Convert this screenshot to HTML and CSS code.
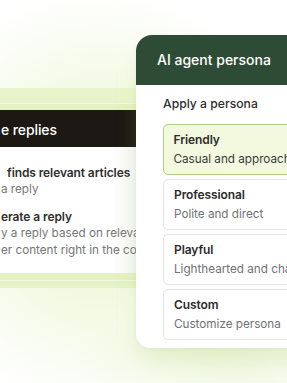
FILE: index.html
```html
<!DOCTYPE html>
<html>
<head>
<meta charset="utf-8">
<link rel="stylesheet" href="styles.css">
</head>
<body>
<div class="stage">
  <div class="left-band">
    <div class="reply-card">
      <div class="reply-head">e replies</div>
      <div class="reply-body">
        <div class="step">
          <div class="step-title indent">finds relevant articles</div>
          <div class="step-sub">a reply</div>
        </div>
        <div class="step">
          <div class="step-title">erate a reply</div>
          <div class="step-sub">y a reply based on relevan</div>
          <div class="step-sub">er content right in the cor</div>
        </div>
      </div>
    </div>
  </div>
  <div class="persona-card">
    <div class="persona-head">AI agent persona</div>
    <div class="persona-body">
      <div class="persona-label">Apply a persona</div>
      <div class="options">
        <div class="option selected">
          <div class="opt-title">Friendly</div>
          <div class="opt-sub">Casual and approach</div>
        </div>
        <div class="option">
          <div class="opt-title">Professional</div>
          <div class="opt-sub">Polite and direct</div>
        </div>
        <div class="option">
          <div class="opt-title">Playful</div>
          <div class="opt-sub">Lighthearted and cha</div>
        </div>
        <div class="option">
          <div class="opt-title">Custom</div>
          <div class="opt-sub">Customize persona</div>
        </div>
      </div>
    </div>
  </div>
</div>
</body>
</html>
```
FILE: styles.css
```css
* { box-sizing: border-box; margin: 0; padding: 0; }
html, body { width: 287px; height: 383px; overflow: hidden; background: #fff; }
body { font-family: Inter, "Noto Sans", sans-serif; -webkit-font-smoothing: antialiased; }

.stage {
  width: 287px;
  height: 383px;
  overflow: hidden;
  display: flex;
  align-items: flex-start;
  background:
    radial-gradient(ellipse 190px 210px at 100px 200px, rgba(226, 241, 184, 0.95) 0%, rgba(236, 246, 210, 0.7) 45%, rgba(255, 255, 255, 0) 100%),
    radial-gradient(ellipse 160px 60px at 230px 360px, rgba(236, 245, 214, 0.8) 0%, rgba(255, 255, 255, 0) 100%),
    #fff;
}

.left-band {
  flex: 0 0 136px;
  margin-top: 88px;
  padding: 22px 0 15px;
  background:
    linear-gradient(to bottom,
      #eaf4cc 0, #eaf4cc 15px,
      #f1f8df 15px, #f1f8df 16px,
      #e4f1c0 16px, #e4f1c0 calc(100% - 8px),
      #eff7dc calc(100% - 8px), #eff7dc calc(100% - 7px),
      #e6f2c7 calc(100% - 7px));
}

.reply-card {
  width: 136px;
  overflow: hidden;
  background: #fff;
  white-space: nowrap;
}

.reply-head {
  height: 37px;
  background: #1c1914;
  color: #fff;
  font-size: 14px;
  font-weight: 500;
  line-height: 40px;
  padding-left: 1px;
  letter-spacing: -0.1px;
}

.reply-body {
  height: 126px;
  padding: 17px 0 0 1px;
  display: flex;
  flex-direction: column;
  gap: 10px;
  background: linear-gradient(to right, #fff 0, #fff 82%, #f4f4f4 100%);
}

.step-title {
  font-size: 12px;
  font-weight: 600;
  color: #2f2f2f;
  line-height: 17px;
  letter-spacing: -0.1px;
}
.step-title.indent { padding-left: 6px; }

.step-sub {
  font-size: 11.7px;
  color: #767676;
  line-height: 17px;
}

.persona-card {
  flex: 0 0 200px;
  margin-top: 35px;
  background: #fff;
  border-radius: 16px 0 0 14px;
  overflow: hidden;
  box-shadow: 0 14px 24px -6px rgba(160, 200, 100, 0.28), 0 1px 4px rgba(0, 0, 0, 0.04);
}

.persona-head {
  height: 50px;
  background: #2e4c35;
  color: #fff;
  font-size: 14px;
  font-weight: 500;
  line-height: 50px;
  padding-left: 21px;
}

.persona-body {
  padding: 10px 0 8px 27px;
}

.persona-label {
  font-size: 12.2px;
  font-weight: 500;
  color: #2e2e2e;
  line-height: 18px;
  margin-bottom: 11px;
}

.options {
  display: flex;
  flex-direction: column;
  gap: 4px;
}

.option {
  height: 51px;
  border: 1px solid #e2e3e2;
  border-radius: 5px;
  padding: 6px 10px 0;
  white-space: nowrap;
  overflow: hidden;
}

.option.selected {
  background: #f3f9de;
  border: 1.5px solid #acd186;
  padding-top: 5.5px;
  padding-left: 9.5px;
}

.opt-title {
  font-size: 12px;
  font-weight: 600;
  color: #2b2b2b;
  line-height: 18px;
  letter-spacing: -0.1px;
}

.opt-sub {
  font-size: 11.7px;
  color: #6f7275;
  line-height: 20px;
}
.option.selected .opt-sub { color: #3a3a3a; }
```
